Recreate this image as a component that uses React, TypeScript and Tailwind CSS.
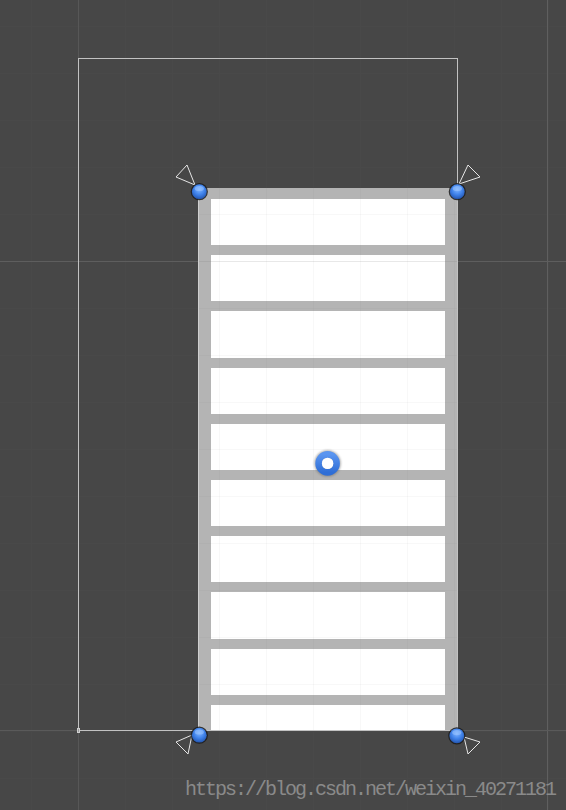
import React from "react";

const minorX = Array.from({ length: 12 }, (_, i) => 31 + 47 * i);
const minorY = Array.from({ length: 17 }, (_, i) => 26 + 47 * i);

function Anchor({ cx, cy }: { cx: number; cy: number }) {
  return (
    <g>
      <circle cx={cx} cy={cy} r={8.6} fill="#1b1b1b" opacity={0.85} />
      <circle cx={cx} cy={cy} r={7.4} fill="url(#anchorGrad)" />
      <ellipse cx={cx} cy={cy - 3.2} rx={4.6} ry={2.6} fill="#9cc6ff" opacity={0.55} />
    </g>
  );
}

export default function App() {
  const items = Array.from({ length: 10 }, (_, i) => i);
  return (
    <div className="relative w-[566px] h-[810px] bg-[#474747] overflow-hidden">
      {/* major grid lines under the content */}
      <svg className="absolute inset-0" width={566} height={810}>
        {minorX.map((x) => (
          <line key={"x" + x} x1={x + 0.5} y1={0} x2={x + 0.5} y2={810} stroke="#494949" strokeWidth={1} />
        ))}
        {minorY.map((y) => (
          <line key={"y" + y} x1={0} y1={y + 0.5} x2={566} y2={y + 0.5} stroke="#494949" strokeWidth={1} />
        ))}
        <line x1={78.5} y1={0} x2={78.5} y2={810} stroke="#575757" strokeWidth={1} />
        <line x1={547.5} y1={0} x2={547.5} y2={810} stroke="#5f5f5f" strokeWidth={1} />
        <line x1={0} y1={261.5} x2={566} y2={261.5} stroke="#5e5e5e" strokeWidth={1} />
        <line x1={0} y1={730.5} x2={566} y2={730.5} stroke="#5a5a5a" strokeWidth={1} />
      </svg>

      {/* scroll view panel */}
      <div className="absolute left-[198px] top-[188px] w-[259px] h-[542px] bg-[#b4b4b4] border-l border-[#cfcfcf] pt-[11px] pl-[12px] pr-[12px] flex flex-col gap-[10px] overflow-hidden">
        {items.map((i) => (
          <div key={i} className="shrink-0 h-[46.2px] bg-white" />
        ))}
      </div>

      {/* faint grid overlay across the panel */}
      <svg className="absolute inset-0 pointer-events-none" width={566} height={810}>
        <g clipPath="url(#panelClip)">
          {minorX.map((x) => (
            <line key={"ox" + x} x1={x + 0.5} y1={0} x2={x + 0.5} y2={810} stroke="rgba(120,120,120,0.05)" strokeWidth={1} />
          ))}
          {minorY.map((y) => (
            <line key={"oy" + y} x1={0} y1={y + 0.5} x2={566} y2={y + 0.5} stroke="rgba(120,120,120,0.05)" strokeWidth={1} />
          ))}
          <line x1={0} y1={261.5} x2={566} y2={261.5} stroke="rgba(120,120,120,0.12)" strokeWidth={1} />
        </g>
        <defs>
          <clipPath id="panelClip">
            <rect x={199} y={188} width={258} height={542} />
          </clipPath>
        </defs>
      </svg>

      {/* parent rect outline */}
      <div className="absolute left-[78px] top-[58px] w-[380px] h-[673px] border border-[#c2c2c2]" />
      <div className="absolute left-[77px] top-[728px] w-[3px] h-[5px] border border-[#d0d0d0] bg-[#9a9a9a]" />

      {/* handles, anchors and pivot */}
      <svg className="absolute inset-0 pointer-events-none" width={566} height={810}>
        <defs>
          <radialGradient id="anchorGrad" cx="50%" cy="35%" r="65%">
            <stop offset="0%" stopColor="#7fb4ff" />
            <stop offset="55%" stopColor="#3f82ea" />
            <stop offset="100%" stopColor="#2456b0" />
          </radialGradient>
          <linearGradient id="pivotGrad" x1="0" y1="0" x2="0" y2="1">
            <stop offset="0%" stopColor="#5a95f0" />
            <stop offset="100%" stopColor="#2f6ed6" />
          </linearGradient>
          <filter id="halo" x="-50%" y="-50%" width="200%" height="200%">
            <feGaussianBlur stdDeviation="1.2" />
          </filter>
        </defs>

        <g fill="none" stroke="#e6e6e6" strokeWidth={1} strokeLinejoin="round">
          <polygon points="176,177 187,165 195,185" />
          <polygon points="468,165 480,177 459,184" />
          <polygon points="176,742 188,754 192,735" />
          <polygon points="468,754 480,742 464,737" />
        </g>

        <Anchor cx={199.3} cy={191.7} />
        <Anchor cx={457.3} cy={191.7} />
        <Anchor cx={199.3} cy={735.2} />
        <Anchor cx={456.8} cy={735.8} />

        {/* pivot */}
        <circle cx={327.6} cy={463.4} r={13.2} fill="#6a6a6a" opacity={0.55} filter="url(#halo)" />
        <circle cx={327.6} cy={463.4} r={9} fill="none" stroke="url(#pivotGrad)" strokeWidth={6.6} />
        <circle cx={327.6} cy={463.4} r={5.7} fill="#ffffff" />
      </svg>

      {/* watermark */}
      <div
        className="absolute left-[185px] top-[780px] text-[20px] leading-[20px] tracking-[-2px] text-[#8a8a8a] whitespace-nowrap"
        style={{ fontFamily: '"Liberation Mono", "DejaVu Sans Mono", monospace' }}
      >
        https://blog.csdn.net/weixin_40271181
      </div>
    </div>
  );
}
